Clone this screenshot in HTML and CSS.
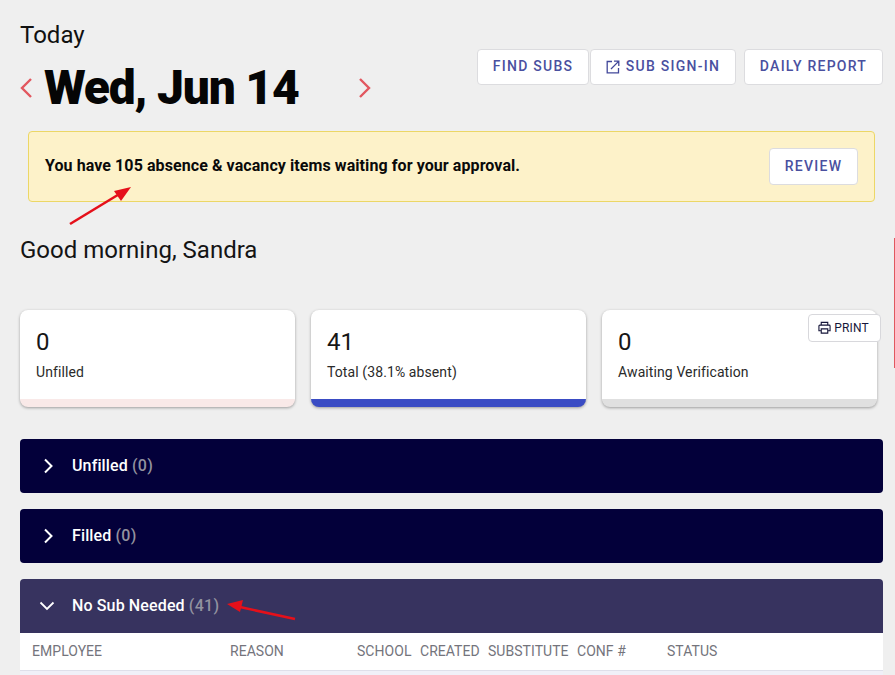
FILE: index.html
```html
<!DOCTYPE html>
<html lang="en">
<head>
<meta charset="utf-8">
<title>Today</title>
<link rel="stylesheet" href="styles.css">
</head>
<body>
<main class="page">
  <header class="top">
    <div class="top-left">
      <div class="today">Today</div>
      <div class="date-row">
        <svg class="nav-icon" viewBox="0 0 14 22"><path d="M12 2 3 11l9 9"/></svg>
        <h1 class="date">Wed, Jun 14</h1>
        <svg class="nav-icon nav-next" viewBox="0 0 14 22"><path d="M2 2l9 9-9 9"/></svg>
      </div>
    </div>
    <div class="actions">
      <button class="btn btn-find">FIND SUBS</button>
      <button class="btn btn-sign">
        <svg class="ext-icon" viewBox="0 0 14 14"><path d="M6 1.500H1.200v11.300h11.300V8M8 1.200h4.800V6M12.600 1.400 5 9"/></svg>SUB SIGN-IN
      </button>
      <button class="btn btn-report">DAILY REPORT</button>
    </div>
  </header>

  <section class="banner">
    <strong class="banner-text">You have 105 absence &amp; vacancy items waiting for your approval.</strong>
    <button class="btn btn-review">REVIEW</button>
  </section>

  <h2 class="greeting">Good morning, Sandra</h2>

  <section class="cards">
    <article class="card card-unfilled"><div class="num">0</div><div class="label">Unfilled</div></article>
    <article class="card card-total"><div class="num">41</div><div class="label">Total (38.1% absent)</div></article>
    <article class="card card-await"><div class="num">0</div><div class="label">Awaiting Verification</div></article>
    <button class="print">
      <svg class="print-icon" viewBox="0 0 14 14"><path d="M3.500 4.500V1.500h7v3M3.500 10.500H1V5.500a1 1 0 0 1 1-1h10a1 1 0 0 1 1 1v5h-2.500M3.500 8.500h7v4.500h-7z"/></svg>PRINT
    </button>
  </section>

  <section class="panels">
    <div class="panel">
      <svg class="chev" viewBox="0 0 12 16"><path d="M2 1.500 8.500 8 2 14.500"/></svg>
      <span class="panel-title">Unfilled <span class="count">(0)</span></span>
    </div>
    <div class="panel">
      <svg class="chev" viewBox="0 0 12 16"><path d="M2 1.500 8.500 8 2 14.500"/></svg>
      <span class="panel-title">Filled <span class="count">(0)</span></span>
    </div>
    <div class="open-group">
      <div class="panel panel-open">
        <svg class="chev chev-down" viewBox="0 0 16 12"><path d="M1.500 2.500 8 9l6.500-6.500"/></svg>
        <span class="panel-title">No Sub Needed <span class="count">(41)</span></span>
      </div>
      <div class="thead">
        <span>EMPLOYEE</span><span>REASON</span><span>SCHOOL</span><span>CREATED</span><span>SUBSTITUTE</span><span>CONF #</span><span>STATUS</span>
      </div>
    </div>
  </section>
</main>

<div class="edge-mark"></div>
<svg class="annot" viewBox="0 0 895 675" aria-hidden="true">
  <path class="annot-line" d="M70 224 121 193"/>
  <path class="annot-head" d="M131 187 114 191 121 201z"/>
  <path class="annot-line" d="M295 619 240 607"/>
  <path class="annot-head" d="M227 604 243 600 240 612z"/>
</svg>
</body>
</html>
```
FILE: styles.css
```css
* { box-sizing: border-box; }
html, body { margin: 0; height: 100%; }
body {
  background: #efefef;
  font-family: Roboto, "Liberation Sans", sans-serif;
  color: #111;
  overflow: hidden;
}
.page { padding: 20px 12px 0 20px; }

.top { display: flex; justify-content: space-between; align-items: flex-start; height: 111px; }
.today { font-size: 24px; line-height: 30px; }
.date-row { display: flex; align-items: center; height: 60px; margin-top: 8px; }
.nav-icon { width: 14px; height: 22px; margin-left: -1px; fill: none; stroke: #e2575f; stroke-width: 2.4; }
.date { margin: 0 0 0 11px; width: 312px; font-size: 48px; line-height: 60px; font-weight: 900; letter-spacing: -1.2px; color: #050505; }
.nav-next { margin-left: 2px; }

.actions { display: flex; margin-top: 29px; }
.btn {
  height: 36px;
  background: #fff;
  border: 1px solid #dcdcdf;
  border-radius: 4px;
  color: #4a509f;
  font: 500 14px/1 Roboto, sans-serif;
  letter-spacing: 1.25px;
  padding: 0 0 2px;
  display: flex;
  align-items: center;
  justify-content: center;
}
.btn-find { width: 112px; }
.btn-sign { width: 146px; margin-left: 1px; }
.btn-report { width: 139px; margin-left: 8px; }
.ext-icon { width: 14px; height: 14px; margin: 2px 6px 0 0; fill: none; stroke: #42489a; stroke-width: 1.3; }

.banner {
  margin-left: 8px;
  width: 847px;
  height: 71px;
  background: #fdf2c9;
  border: 1px solid #ecd766;
  border-radius: 4px;
  display: flex;
  align-items: center;
  justify-content: space-between;
  padding: 0 16px;
}
.banner-text { font-size: 16px; font-weight: 700; letter-spacing: .08px; color: #0a0a0a; padding-bottom: 2px; }
.btn-review { width: 89px; height: 37px; }

.greeting { margin: 33px 0 0; font-size: 24px; line-height: 30px; font-weight: 400; color: #141414; }

.cards { position: relative; display: flex; gap: 16px; margin-top: 45px; }
.card {
  width: 275px;
  height: 97px;
  background: #fff;
  border-radius: 8px;
  border-bottom: 8px solid #ccc;
  padding: 18px 16px 0;
  box-shadow: 0 1px 3px rgba(0,0,0,.35);
}
.card-unfilled { border-bottom-color: #f9e9e8; }
.card-total { border-bottom-color: #3a4cc4; }
.card-await { border-bottom-color: #e0e0e0; }
.num { font-size: 24px; line-height: 28px; color: #161616; }
.label { margin-top: 6px; font-size: 14px; line-height: 20px; letter-spacing: .1px; color: #2a2a2a; }
.print {
  position: absolute;
  left: 788px;
  top: 4px;
  width: 73px;
  height: 28px;
  background: #fff;
  border: 1px solid #d8d8dc;
  border-radius: 4px;
  color: #16163a;
  font: 400 12px/1 Roboto, sans-serif;
  letter-spacing: .1px;
  display: flex;
  align-items: center;
  justify-content: center;
  padding: 0 0 1px;
}
.print-icon { width: 13px; height: 13px; margin-right: 3px; margin-left: -2px; fill: none; stroke: #16163a; stroke-width: 1.2; }

.panels { margin-top: 32px; display: flex; flex-direction: column; gap: 16px; }
.panel {
  height: 54px;
  background: #03003a;
  border-radius: 4px;
  display: flex;
  align-items: center;
  color: #fff;
  padding-left: 23px;
}
.panel-open { background: #37335f; border-radius: 4px 4px 0 0; padding-left: 19px; }
.chev { width: 12px; height: 16px; fill: none; stroke: #fff; stroke-width: 2; margin-right: 17px; }
.chev-down { width: 16px; height: 12px; margin-right: 17px; stroke-width: 1.8; }
.panel-title { font-size: 16px; font-weight: 500; letter-spacing: .13px; padding-bottom: 2px; }
.count { font-weight: 500; letter-spacing: .3px; color: #92929f; }
.thead {
  display: grid;
  grid-template-columns: 198px 127px 63px 68px 89px 90px 1fr;
  align-items: center;
  height: 38px;
  padding: 0 0 1px 12px;
  background: #fff;
  border-bottom: 1px solid #dfdfea;
  font-size: 14px;
  letter-spacing: .04px;
  color: #74747c;
  white-space: nowrap;
}
.open-group::after { content: ""; display: block; height: 10px; background: #f0f0f8; }

.edge-mark { position: absolute; right: 0; top: 238px; width: 1px; height: 130px; background: #e2575f; }
.annot { position: absolute; left: 0; top: 0; width: 895px; height: 675px; pointer-events: none; }
.annot-line { fill: none; stroke: #e5101a; stroke-width: 2.600; }
.annot-head { fill: #e5101a; }
```
